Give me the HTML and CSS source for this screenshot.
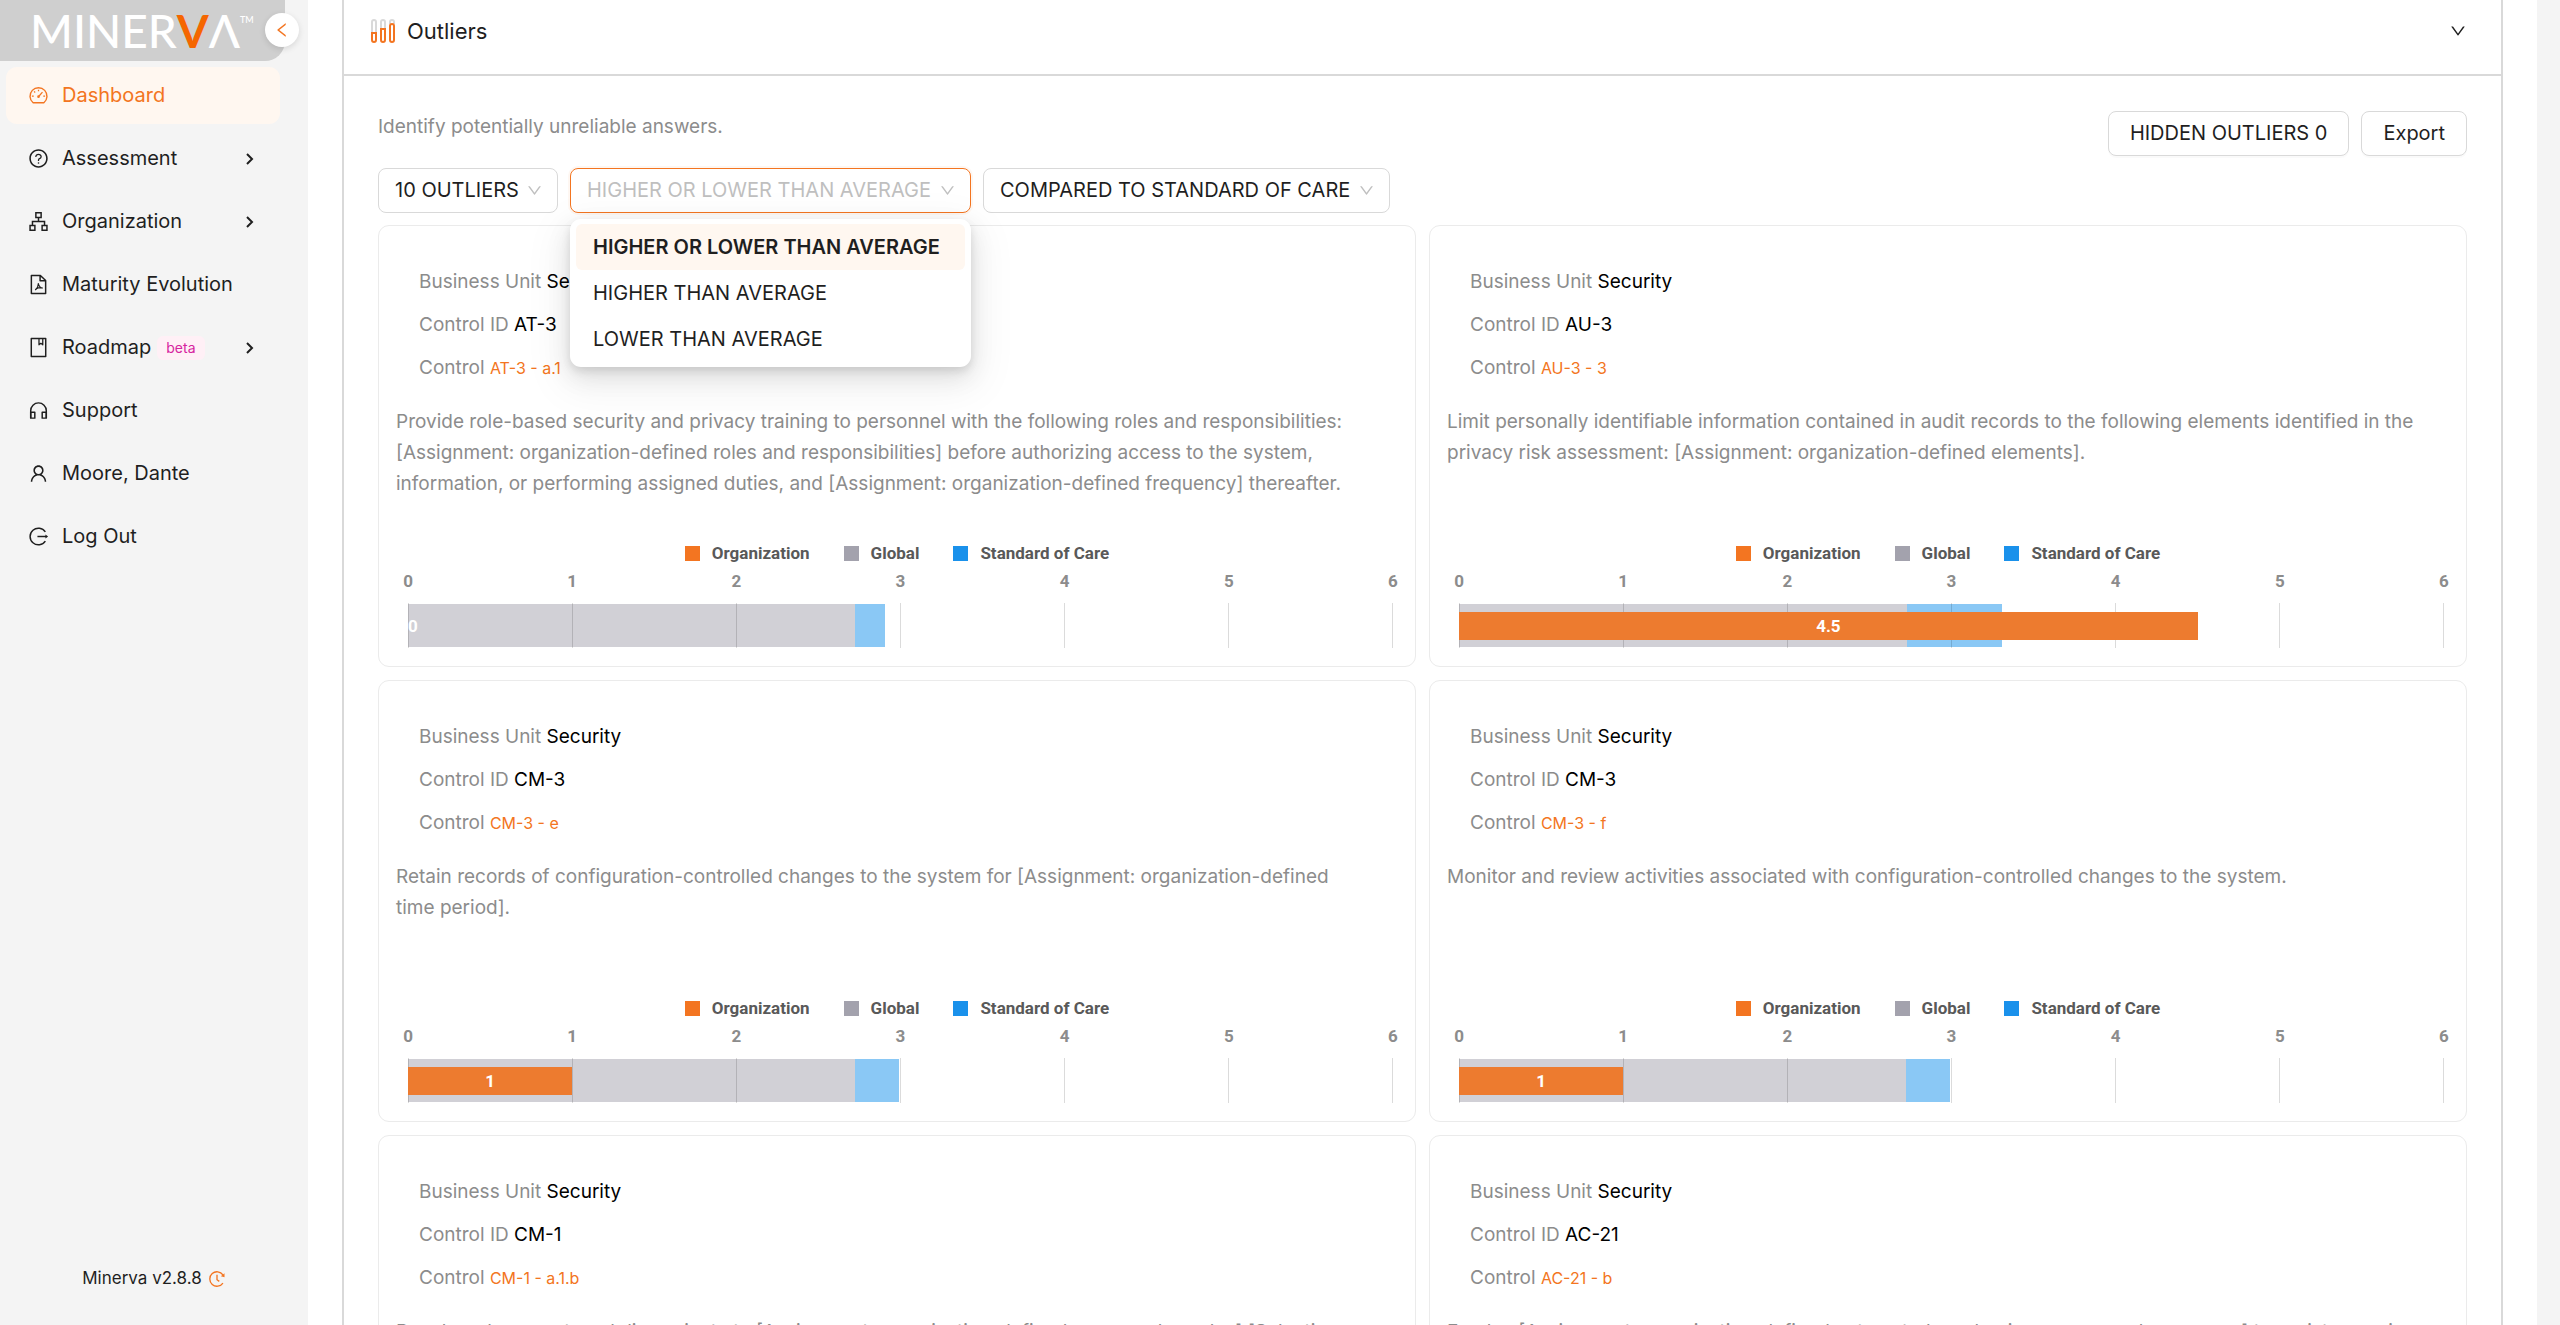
FILE: index.html
```html
<!DOCTYPE html>
<html lang="en">
<head>
    <meta charset="UTF-8">
    <meta name="viewport" content="width=device-width, initial-scale=1.0">
    <title>Minerva - Outliers</title>
    <link rel="stylesheet" href="styles.css">
</head>
<body>
<div class="app">
    <aside class="sidebar">
        <div class="logo" aria-label="Minerva">MINER<span class="logo-v">V</span>Λ<sup>TM</sup></div>
        <button class="collapse" type="button" aria-label="Collapse menu">
            <svg viewBox="0 0 1024 1024" fill="currentColor"><path d="M724 218.3V141c0-6.7-7.7-10.4-12.9-6.3L260.3 486.8a31.86 31.86 0 000 50.3l450.8 352.1c5.3 4.1 12.9.4 12.9-6.3v-77.3c0-4.9-2.3-9.6-6.1-12.6l-360-281 360-281.1c3.8-3 6.1-7.7 6.1-12.6z"/></svg>
        </button>
        <nav class="menu">
            <a class="menu-item active" href="#">
                <svg class="icon" viewBox="0 0 1024 1024" fill="none" stroke="currentColor" stroke-width="68"><path d="M250 866A414 414 0 1 1 774 866Z" stroke-linejoin="round"/><path d="M512 226v84M298 312l52 52M190 540h90M744 540h90M520 560L706 346" stroke-width="60"/><circle cx="512" cy="568" r="30"/></svg>
                <span>Dashboard</span>
            </a>
            <a class="menu-item" href="#">
                <svg class="icon" viewBox="0 0 1024 1024" fill="currentColor"><path d="M512 64C264.600 64 64 264.600 64 512s200.600 448 448 448 448-200.600 448-448S759.400 64 512 64zm0 820c-205.400 0-372-166.600-372-372s166.600-372 372-372 372 166.600 372 372-166.600 372-372 372z"/><path d="M623.600 316.700C593.600 290.400 554 276 512 276s-81.600 14.500-111.600 40.700C369.200 344 352 380.700 352 420v7.600c0 4.400 3.600 8 8 8h48c4.400 0 8-3.600 8-8V420c0-44.100 43.100-80 96-80s96 35.900 96 80c0 31.100-22 59.600-56.100 72.700-21.200 8.100-39.200 22.300-52.100 40.900-13.100 19-19.900 41.800-19.900 64.900V620c0 4.400 3.600 8 8 8h48c4.400 0 8-3.600 8-8v-22.700a48.300 48.300 0 0130.900-44.800c59-22.700 97.100-74.700 97.100-132.500.1-39.300-17.100-76-48.300-103.300zM472 732a40 40 0 1080 0 40 40 0 10-80 0z"/></svg>
                <span>Assessment</span>
                <svg class="arrow" viewBox="0 0 14 14" fill="none" stroke="currentColor" stroke-width="2"><path d="M3 2l5 5-5 5"/></svg>
            </a>
            <a class="menu-item" href="#">
                <svg class="icon" viewBox="0 0 1024 1024" fill="none" stroke="currentColor" stroke-width="72"><path d="M384 84h256v236H384zM100 704h236v236H100zM688 704h236v236H688zM512 320v192M218 704V512h588v192"/></svg>
                <span>Organization</span>
                <svg class="arrow" viewBox="0 0 14 14" fill="none" stroke="currentColor" stroke-width="2"><path d="M3 2l5 5-5 5"/></svg>
            </a>
            <a class="menu-item" href="#">
                <svg class="icon" viewBox="0 0 1024 1024" fill="none" stroke="currentColor" stroke-width="72" stroke-linejoin="round"><path d="M164 70h440l256 250v634H164zM590 80v254h260"/><path d="M496 440c30 140 80 220 220 250M500 470c0 140-60 240-150 310M380 730c100-60 200-80 330-60" stroke-width="52"/></svg>
                <span>Maturity Evolution</span>
            </a>
            <a class="menu-item" href="#">
                <svg class="icon" viewBox="0 0 1024 1024" fill="none" stroke="currentColor" stroke-width="72" stroke-linejoin="round"><path d="M160 68h704v888H160z"/><path d="M536 90v290l92-70 92 70V90" stroke-width="62"/></svg>
                <span>Roadmap</span>
                <span class="tag">beta</span>
                <svg class="arrow" viewBox="0 0 14 14" fill="none" stroke="currentColor" stroke-width="2"><path d="M3 2l5 5-5 5"/></svg>
            </a>
            <a class="menu-item" href="#">
                <svg class="icon" viewBox="0 0 1024 1024" fill="none" stroke="currentColor" stroke-width="72" stroke-linejoin="round"><path d="M132 880V520a380 380 0 0 1 760 0v360"/><path d="M132 600h200v284H132zM692 600h200v284H692z"/></svg>
                <span>Support</span>
            </a>
            <a class="menu-item" href="#">
                <svg class="icon" viewBox="0 0 1024 1024" fill="currentColor"><path d="M858.500 763.600a374 374 0 00-80.600-119.500 375.630 375.630 0 00-119.500-80.600c-.4-.2-.8-.3-1.200-.5C719.500 518 760 444.700 760 362c0-137-111-248-248-248S264 225 264 362c0 82.700 40.500 156 102.800 201.100-.4.2-.8.3-1.200.5-44.800 18.900-85 46-119.500 80.600a375.630 375.630 0 00-80.600 119.500A371.700 371.700 0 00136 901.800a8 8 0 008 8.200h60c4.400 0 7.900-3.500 8-7.800 2-77.200 33-149.500 87.800-204.300 56.700-56.700 132-87.900 212.200-87.900s155.500 31.200 212.200 87.900C779 752.700 810 825 812 902.200c.1 4.400 3.600 7.800 8 7.800h60a8 8 0 008-8.200c-1-47.800-10.900-94.300-29.500-138.200zM512 534c-45.900 0-89.100-17.900-121.600-50.400S340 407.900 340 362c0-45.900 17.900-89.100 50.400-121.600S466.100 190 512 190s89.100 17.900 121.600 50.400S684 316.100 684 362c0 45.900-17.900 89.100-50.400 121.600S557.900 534 512 534z"/></svg>
                <span>Moore, Dante</span>
            </a>
            <a class="menu-item" href="#">
                <svg class="icon" viewBox="0 0 1024 1024" fill="none" stroke="currentColor" stroke-width="72"><path d="M846 290A405 405 0 1 0 846 734"/><path d="M460 512h420"/><path d="M850 420l130 92-130 92z" fill="currentColor" stroke="none"/></svg>
                <span>Log Out</span>
            </a>
        </nav>
        <footer class="version">
            <span>Minerva v2.8.8</span>
            <svg viewBox="0 0 1024 1024" fill="none" stroke="currentColor" stroke-width="76"><path d="M850 280A410 410 0 1 0 850 744"/><path d="M512 270v280l130 96"/><path d="M940 180v230l-210-50z" fill="currentColor" stroke="none"/></svg>
        </footer>
    </aside>

    <main class="content">
        <section class="panel">
            <header class="panel-header">
                <svg class="panel-icon" viewBox="0 0 24 24" fill="none" stroke-width="2"><path d="M1 13V3a2 2 0 0 1 4 0v10M10 9V3a2 2 0 0 1 4 0v6M19 5V3a2 2 0 0 1 4 0v2" stroke="#d9d9d9"/><path d="M1 14h4v7a2 2 0 0 1-4 0zM10 10h4v11a2 2 0 0 1-4 0zM19 7a2 2 0 0 1 4 0v14a2 2 0 0 1-4 0z" stroke="#f37521"/></svg>
                <h2>Outliers</h2>
                <svg class="panel-toggle" viewBox="0 0 1024 1024" fill="currentColor"><path d="M884 256h-75c-5.100 0-9.900 2.500-12.900 6.600L512 654.200 227.900 262.600c-3-4.100-7.800-6.600-12.900-6.600h-75c-6.500 0-10.300 7.400-6.500 12.700l352.600 486.100c12.800 17.600 39 17.600 51.700 0l352.600-486.100c3.900-5.300.1-12.700-6.400-12.700z"/></svg>
            </header>
            <div class="panel-body">
                <div class="intro">
                    <p>Identify potentially unreliable answers.</p>
                    <div class="actions">
                        <button class="btn" type="button">HIDDEN OUTLIERS 0</button>
                        <button class="btn" type="button">Export</button>
                    </div>
                </div>

                <div class="filters">
                    <div class="select">
                        <select aria-label="Number of outliers">
                            <option>10 OUTLIERS</option>
                        </select>
                        <svg viewBox="0 0 1024 1024" fill="currentColor"><path d="M884 256h-75c-5.100 0-9.900 2.500-12.900 6.600L512 654.200 227.900 262.600c-3-4.100-7.800-6.600-12.900-6.600h-75c-6.500 0-10.300 7.400-6.500 12.700l352.600 486.100c12.800 17.600 39 17.600 51.700 0l352.600-486.100c3.900-5.300.1-12.700-6.400-12.700z"/></svg>
                    </div>
                    <div class="select open">
                        <select aria-label="Direction">
                            <option>HIGHER OR LOWER THAN AVERAGE</option>
                        </select>
                        <svg viewBox="0 0 1024 1024" fill="currentColor"><path d="M884 256h-75c-5.100 0-9.900 2.500-12.900 6.600L512 654.200 227.900 262.600c-3-4.100-7.800-6.600-12.900-6.600h-75c-6.500 0-10.300 7.400-6.500 12.700l352.600 486.100c12.800 17.600 39 17.600 51.700 0l352.600-486.100c3.900-5.300.1-12.700-6.400-12.700z"/></svg>
                        <ul class="dropdown" role="listbox">
                            <li class="selected" role="option" aria-selected="true">HIGHER OR LOWER THAN AVERAGE</li>
                            <li role="option">HIGHER THAN AVERAGE</li>
                            <li role="option">LOWER THAN AVERAGE</li>
                        </ul>
                    </div>
                    <div class="select">
                        <select aria-label="Comparison">
                            <option>COMPARED TO STANDARD OF CARE</option>
                        </select>
                        <svg viewBox="0 0 1024 1024" fill="currentColor"><path d="M884 256h-75c-5.100 0-9.900 2.500-12.900 6.600L512 654.200 227.900 262.600c-3-4.100-7.800-6.600-12.900-6.600h-75c-6.500 0-10.300 7.400-6.500 12.700l352.600 486.100c12.800 17.600 39 17.600 51.700 0l352.600-486.100c3.900-5.300.1-12.700-6.400-12.700z"/></svg>
                    </div>
                </div>

                <div class="cards">
                    <article class="card">
                        <div class="facts">
                            <p>Business Unit <b>Security</b></p>
                            <p>Control ID <b>AT-3</b></p>
                            <p>Control <a href="#">AT-3 - a.1</a></p>
                        </div>
                        <p class="text">Provide role-based security and privacy training to personnel with the following roles and responsibilities: [Assignment: organization-defined roles and responsibilities] before authorizing access to the system, information, or performing assigned duties, and [Assignment: organization-defined frequency] thereafter.</p>
                        <div class="chart">
                            <div class="legend"><span class="org">Organization</span><span class="global">Global</span><span class="soc">Standard of Care</span></div>
                            <div class="axis"><span>0</span><span>1</span><span>2</span><span>3</span><span>4</span><span>5</span><span>6</span></div>
                            <div class="plot">
                                <div class="range"><i class="global" style="width: 45.4%"></i><i class="soc" style="width: 3%"></i></div>
                                <div class="grid"><i></i><i></i><i></i><i></i><i></i><i></i><i></i></div>
                                <div class="bar" style="width: 0">0</div>
                            </div>
                        </div>
                    </article>

                    <article class="card">
                        <div class="facts">
                            <p>Business Unit <b>Security</b></p>
                            <p>Control ID <b>AU-3</b></p>
                            <p>Control <a href="#">AU-3 - 3</a></p>
                        </div>
                        <p class="text">Limit personally identifiable information contained in audit records to the following elements identified in the privacy risk assessment: [Assignment: organization-defined elements].</p>
                        <div class="chart">
                            <div class="legend"><span class="org">Organization</span><span class="global">Global</span><span class="soc">Standard of Care</span></div>
                            <div class="axis"><span>0</span><span>1</span><span>2</span><span>3</span><span>4</span><span>5</span><span>6</span></div>
                            <div class="plot">
                                <div class="range"><i class="global" style="width: 45.5%"></i><i class="soc" style="width: 9.6%"></i></div>
                                <div class="grid"><i></i><i></i><i></i><i></i><i></i><i></i><i></i></div>
                                <div class="bar" style="width: 75%">4.5</div>
                            </div>
                        </div>
                    </article>

                    <article class="card">
                        <div class="facts">
                            <p>Business Unit <b>Security</b></p>
                            <p>Control ID <b>CM-3</b></p>
                            <p>Control <a href="#">CM-3 - e</a></p>
                        </div>
                        <p class="text">Retain records of configuration-controlled changes to the system for [Assignment: organization-defined time period].</p>
                        <div class="chart">
                            <div class="legend"><span class="org">Organization</span><span class="global">Global</span><span class="soc">Standard of Care</span></div>
                            <div class="axis"><span>0</span><span>1</span><span>2</span><span>3</span><span>4</span><span>5</span><span>6</span></div>
                            <div class="plot">
                                <div class="range"><i class="global" style="width: 45.4%"></i><i class="soc" style="width: 4.4%"></i></div>
                                <div class="grid"><i></i><i></i><i></i><i></i><i></i><i></i><i></i></div>
                                <div class="bar" style="width: 16.67%">1</div>
                            </div>
                        </div>
                    </article>

                    <article class="card">
                        <div class="facts">
                            <p>Business Unit <b>Security</b></p>
                            <p>Control ID <b>CM-3</b></p>
                            <p>Control <a href="#">CM-3 - f</a></p>
                        </div>
                        <p class="text">Monitor and review activities associated with configuration-controlled changes to the system.</p>
                        <div class="chart">
                            <div class="legend"><span class="org">Organization</span><span class="global">Global</span><span class="soc">Standard of Care</span></div>
                            <div class="axis"><span>0</span><span>1</span><span>2</span><span>3</span><span>4</span><span>5</span><span>6</span></div>
                            <div class="plot">
                                <div class="range"><i class="global" style="width: 45.4%"></i><i class="soc" style="width: 4.4%"></i></div>
                                <div class="grid"><i></i><i></i><i></i><i></i><i></i><i></i><i></i></div>
                                <div class="bar" style="width: 16.67%">1</div>
                            </div>
                        </div>
                    </article>

                    <article class="card">
                        <div class="facts">
                            <p>Business Unit <b>Security</b></p>
                            <p>Control ID <b>CM-1</b></p>
                            <p>Control <a href="#">CM-1 - a.1.b</a></p>
                        </div>
                        <p class="text">Develop, document, and disseminate to [Assignment: organization-defined personnel or roles] [Selection</p>
                    </article>

                    <article class="card">
                        <div class="facts">
                            <p>Business Unit <b>Security</b></p>
                            <p>Control ID <b>AC-21</b></p>
                            <p>Control <a href="#">AC-21 - b</a></p>
                        </div>
                        <p class="text">Employ [Assignment: organization-defined automated mechanisms or manual processes] to assist users in</p>
                    </article>
                </div>
            </div>
        </section>
    </main>
</div>
</body>
</html>
```
FILE: styles.css
```css
:root {
    --primary: #f37521;
    --primary-bg: #fff7f0;
    --text: #1f1f1f;
    --muted: #8c8c8c;
    --border: #d9d9d9;
    --layout-bg: #f4f4f4;
}

* {
    margin: 0;
    padding: 0;
    box-sizing: border-box;
}

body {
    font-family: Inter, Roboto, sans-serif;
    font-size: 19px;
    line-height: 31px;
    color: var(--text);
    background: var(--layout-bg);
}

a {
    color: var(--primary);
    text-decoration: none;
}

.app {
    display: flex;
    height: 100vh;
    overflow: hidden;
    padding-right: 23px;
}

/* sidebar */
.sidebar {
    position: relative;
    display: flex;
    flex-direction: column;
    flex: 0 0 308px;
}

.logo {
    width: 285px;
    height: 61px;
    padding-left: 30px;
    background: #cfcfcf;
    border-bottom-right-radius: 20px;
    color: #fff;
    font-family: Lato, sans-serif;
    font-size: 46px;
    font-weight: 500;
    line-height: 61px;
    white-space: nowrap;
}

.logo-v {
    color: #f56600;
    font-weight: bold;
}

.logo sup {
    font-size: 9px;
    line-height: 9px;
    vertical-align: 25px;
}

.collapse {
    position: absolute;
    top: 13px;
    right: 9px;
    display: flex;
    align-items: center;
    justify-content: center;
    width: 34px;
    height: 34px;
    border: 0;
    border-radius: 50%;
    background: #fff;
    box-shadow: 0 2px 6px rgba(0, 0, 0, 0.12);
    color: var(--primary);
}

.collapse svg {
    width: 18px;
    height: 18px;
}

.menu {
    display: flex;
    flex-direction: column;
    gap: 6px;
    padding: 6px 28px 0 6px;
    font-size: 20px;
}

.menu-item {
    display: flex;
    align-items: center;
    height: 57px;
    padding: 0 22px;
    border-radius: 11px;
    color: var(--text);
}

.menu-item.active {
    background: var(--primary-bg);
    color: var(--primary);
}

.icon {
    width: 21px;
    height: 21px;
    margin-right: 13px;
}

.arrow {
    width: 14px;
    height: 14px;
    margin-left: auto;
}

.tag {
    margin-left: 6px;
    padding: 0 9px;
    border-radius: 6px;
    background: #fff0f6;
    color: #d6249f;
    font-size: 14px;
    line-height: 24px;
}

.version {
    display: flex;
    align-items: center;
    justify-content: center;
    gap: 6px;
    margin-top: auto;
    padding-bottom: 31px;
    font-size: 17px;
}

.version svg {
    width: 18px;
    height: 18px;
    color: var(--primary);
}

/* outliers panel */
.content {
    flex: 1;
    padding: 0 34px;
    background: #fff;
}

.panel {
    border: 2px solid var(--border);
    border-width: 0 2px 2px;
}

.panel-header {
    display: flex;
    align-items: center;
    padding: 16px 34px 28px 27px;
    border-bottom: 2px solid var(--border);
}

.panel-header h2 {
    font-size: 22px;
    line-height: 30px;
    font-weight: 400;
}

.panel-icon {
    width: 24px;
    height: 24px;
    margin-right: 12px;
}

.panel-toggle {
    width: 18px;
    height: 18px;
    margin-left: auto;
}

.panel-body {
    padding: 35px 34px 34px;
}

.intro {
    display: flex;
    justify-content: space-between;
    color: var(--muted);
}

.actions,
.filters {
    display: flex;
    gap: 12px;
    font-size: 20px;
}

.btn,
.select select {
    height: 45px;
    border: 1px solid var(--border);
    border-radius: 8px;
    background: #fff;
    color: var(--text);
    font: inherit;
}

.btn {
    padding: 0 21px;
    box-shadow: 0 2px 0 rgba(0, 0, 0, 0.02);
}

.filters {
    margin: 12px 0;
}

.select {
    position: relative;
    display: grid;
    align-items: center;
}

.select select {
    grid-area: 1 / 1;
    appearance: none;
    padding: 0 38px 0 16px;
}

.select > svg {
    grid-area: 1 / 1;
    justify-self: end;
    width: 17px;
    height: 17px;
    margin-right: 15px;
    color: #bfbfbf;
    pointer-events: none;
}

.select.open select {
    border-color: var(--primary);
    box-shadow: 0 0 0 2px rgba(243, 117, 33, 0.06);
    color: #bfbfbf;
}

.dropdown {
    position: absolute;
    top: 51px;
    left: 0;
    right: 0;
    z-index: 1;
    padding: 5px 6px;
    border-radius: 11px;
    background: #fff;
    box-shadow: 0 9px 24px rgba(0, 0, 0, 0.1), 0 4px 9px rgba(0, 0, 0, 0.1), 0 13px 40px 11px rgba(0, 0, 0, 0.05);
    list-style: none;
    line-height: 32px;
    white-space: nowrap;
}

.dropdown li {
    padding: 7px 17px;
    border-radius: 6px;
}

.dropdown .selected {
    background: var(--primary-bg);
    font-weight: 600;
}

/* outlier cards */
.cards {
    display: grid;
    grid-template-columns: 1fr 1fr;
    gap: 13px;
}

.card {
    padding: 40px 17px 18px;
    border: 1px solid #ebebeb;
    border-radius: 11px;
}

.facts {
    display: grid;
    gap: 12px;
    margin-bottom: 22px;
    padding-left: 23px;
    color: var(--muted);
}

.facts b {
    color: #000;
    font-weight: 400;
}

.facts a {
    font-size: 16px;
}

.text {
    min-height: 93px;
    padding-right: 30px;
    color: var(--muted);
}

.chart {
    margin-top: 44px;
    padding: 0 5px 0 12px;
    font-family: Roboto, sans-serif;
    font-size: 17px;
    font-weight: 700;
    line-height: 20px;
}

.legend {
    display: flex;
    justify-content: center;
    gap: 34px;
    margin: 0 -5px 0 -12px;
    color: #595959;
}

.legend span {
    display: flex;
    align-items: center;
    gap: 12px;
}

.legend span::before {
    content: '';
    width: 15px;
    height: 15px;
    background: #a3a2ad;
}

.legend .org::before {
    background: var(--primary);
}

.legend .soc::before {
    background: #1a91eb;
}

.axis {
    display: flex;
    justify-content: space-between;
    margin: 8px 0 12px;
    color: var(--muted);
}

.axis span {
    display: flex;
    justify-content: center;
    width: 0;
}

.plot {
    display: grid;
    align-items: center;
    height: 45px;
}

.range,
.grid,
.bar {
    grid-area: 1 / 1;
}

.range {
    display: flex;
    height: 43px;
}

.range .global {
    background: #d1d0d6;
}

.range .soc {
    background: #8ac8f5;
}

.grid {
    display: flex;
    justify-content: space-between;
    height: 45px;
}

.grid i {
    width: 1px;
    background: rgba(0, 0, 0, 0.14);
}

.bar {
    height: 28px;
    background: #ed7b2f;
    color: #fff;
    line-height: 28px;
    text-align: center;
}
```
